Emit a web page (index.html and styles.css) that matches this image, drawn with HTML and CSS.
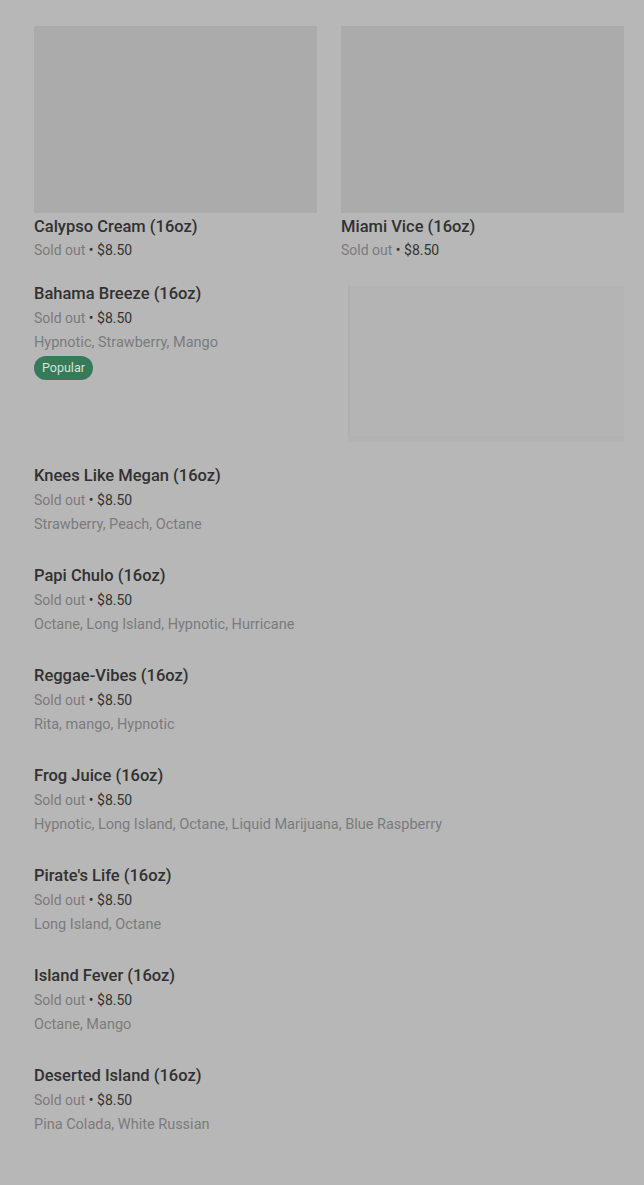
FILE: index.html
```html
<!DOCTYPE html>
<html lang="en">
<head>
<meta charset="utf-8">
<title>Menu</title>
<link rel="stylesheet" href="styles.css">
</head>
<body>
<main class="page">
  <section class="grid">
    <article class="card">
      <div class="thumb"></div>
      <h3 class="title">Calypso Cream (16oz)</h3>
      <p class="meta"><span class="sold">Sold out</span> • $8.50</p>
    </article>
    <article class="card">
      <div class="thumb"></div>
      <h3 class="title">Miami Vice (16oz)</h3>
      <p class="meta"><span class="sold">Sold out</span> • $8.50</p>
    </article>
  </section>

  <ul class="list">
    <li class="item has-image">
      <div class="info">
        <h3 class="title">Bahama Breeze (16oz)</h3>
        <p class="meta"><span class="sold">Sold out</span> • $8.50</p>
        <p class="desc">Hypnotic, Strawberry, Mango</p>
        <span class="badge">Popular</span>
      </div>
      <div class="photo"></div>
    </li>
    <li class="item">
      <div class="info">
        <h3 class="title">Knees Like Megan (16oz)</h3>
        <p class="meta"><span class="sold">Sold out</span> • $8.50</p>
        <p class="desc">Strawberry, Peach, Octane</p>
      </div>
    </li>
    <li class="item">
      <div class="info">
        <h3 class="title">Papi Chulo (16oz)</h3>
        <p class="meta"><span class="sold">Sold out</span> • $8.50</p>
        <p class="desc">Octane, Long Island, Hypnotic, Hurricane</p>
      </div>
    </li>
    <li class="item">
      <div class="info">
        <h3 class="title">Reggae-Vibes (16oz)</h3>
        <p class="meta"><span class="sold">Sold out</span> • $8.50</p>
        <p class="desc">Rita, mango, Hypnotic</p>
      </div>
    </li>
    <li class="item">
      <div class="info">
        <h3 class="title">Frog Juice (16oz)</h3>
        <p class="meta"><span class="sold">Sold out</span> • $8.50</p>
        <p class="desc">Hypnotic, Long Island, Octane, Liquid Marijuana, Blue Raspberry</p>
      </div>
    </li>
    <li class="item">
      <div class="info">
        <h3 class="title">Pirate's Life (16oz)</h3>
        <p class="meta"><span class="sold">Sold out</span> • $8.50</p>
        <p class="desc">Long Island, Octane</p>
      </div>
    </li>
    <li class="item">
      <div class="info">
        <h3 class="title">Island Fever (16oz)</h3>
        <p class="meta"><span class="sold">Sold out</span> • $8.50</p>
        <p class="desc">Octane, Mango</p>
      </div>
    </li>
    <li class="item">
      <div class="info">
        <h3 class="title">Deserted Island (16oz)</h3>
        <p class="meta"><span class="sold">Sold out</span> • $8.50</p>
        <p class="desc">Pina Colada, White Russian</p>
      </div>
    </li>
  </ul>
</main>
</body>
</html>
```

FILE: styles.css
```css
html, body {
  margin: 0;
  padding: 0;
  background: #b7b7b7;
}

body {
  font-family: Roboto, "Liberation Sans", sans-serif;
  color: #2f2f2f;
}

.page {
  padding: 26px 20px 0 34px;
}

.grid {
  display: grid;
  grid-template-columns: 1fr 1fr;
  column-gap: 24px;
}

.thumb {
  height: 187px;
  background: #ababab;
}

.title {
  margin: 0;
  font-size: 16.5px;
  line-height: 25px;
  font-weight: 500;
  color: #313131;
}

.card .title {
  margin-top: 1px;
}

.meta {
  margin: 0;
  font-size: 14px;
  line-height: 24px;
  color: #333333;
}

.card .meta {
  line-height: 22px;
}

.sold {
  color: #7b7b7b;
}

.desc {
  margin: 0;
  font-size: 14.5px;
  line-height: 25px;
  color: #7b7b7b;
}

.list {
  list-style: none;
  margin: 20px 0 0;
  padding: 0;
}

.item {
  display: flex;
  justify-content: space-between;
  padding-bottom: 26px;
}

.item.has-image {
  padding-bottom: 27px;
}

.info {
  display: flex;
  flex-direction: column;
  align-items: flex-start;
}

.badge {
  margin-top: 1px;
  height: 24px;
  padding: 0 8px;
  border-radius: 12px;
  background: #377a59;
  color: #d3e4d9;
  font-size: 12.5px;
  line-height: 24px;
}

.photo {
  width: 274px;
  height: 150px;
  margin-top: 5px;
  background: #b4b4b4;
  border-left: 2px solid #b0b0b0;
  box-shadow: 0 6px 0 #b2b2b2;
}
```
